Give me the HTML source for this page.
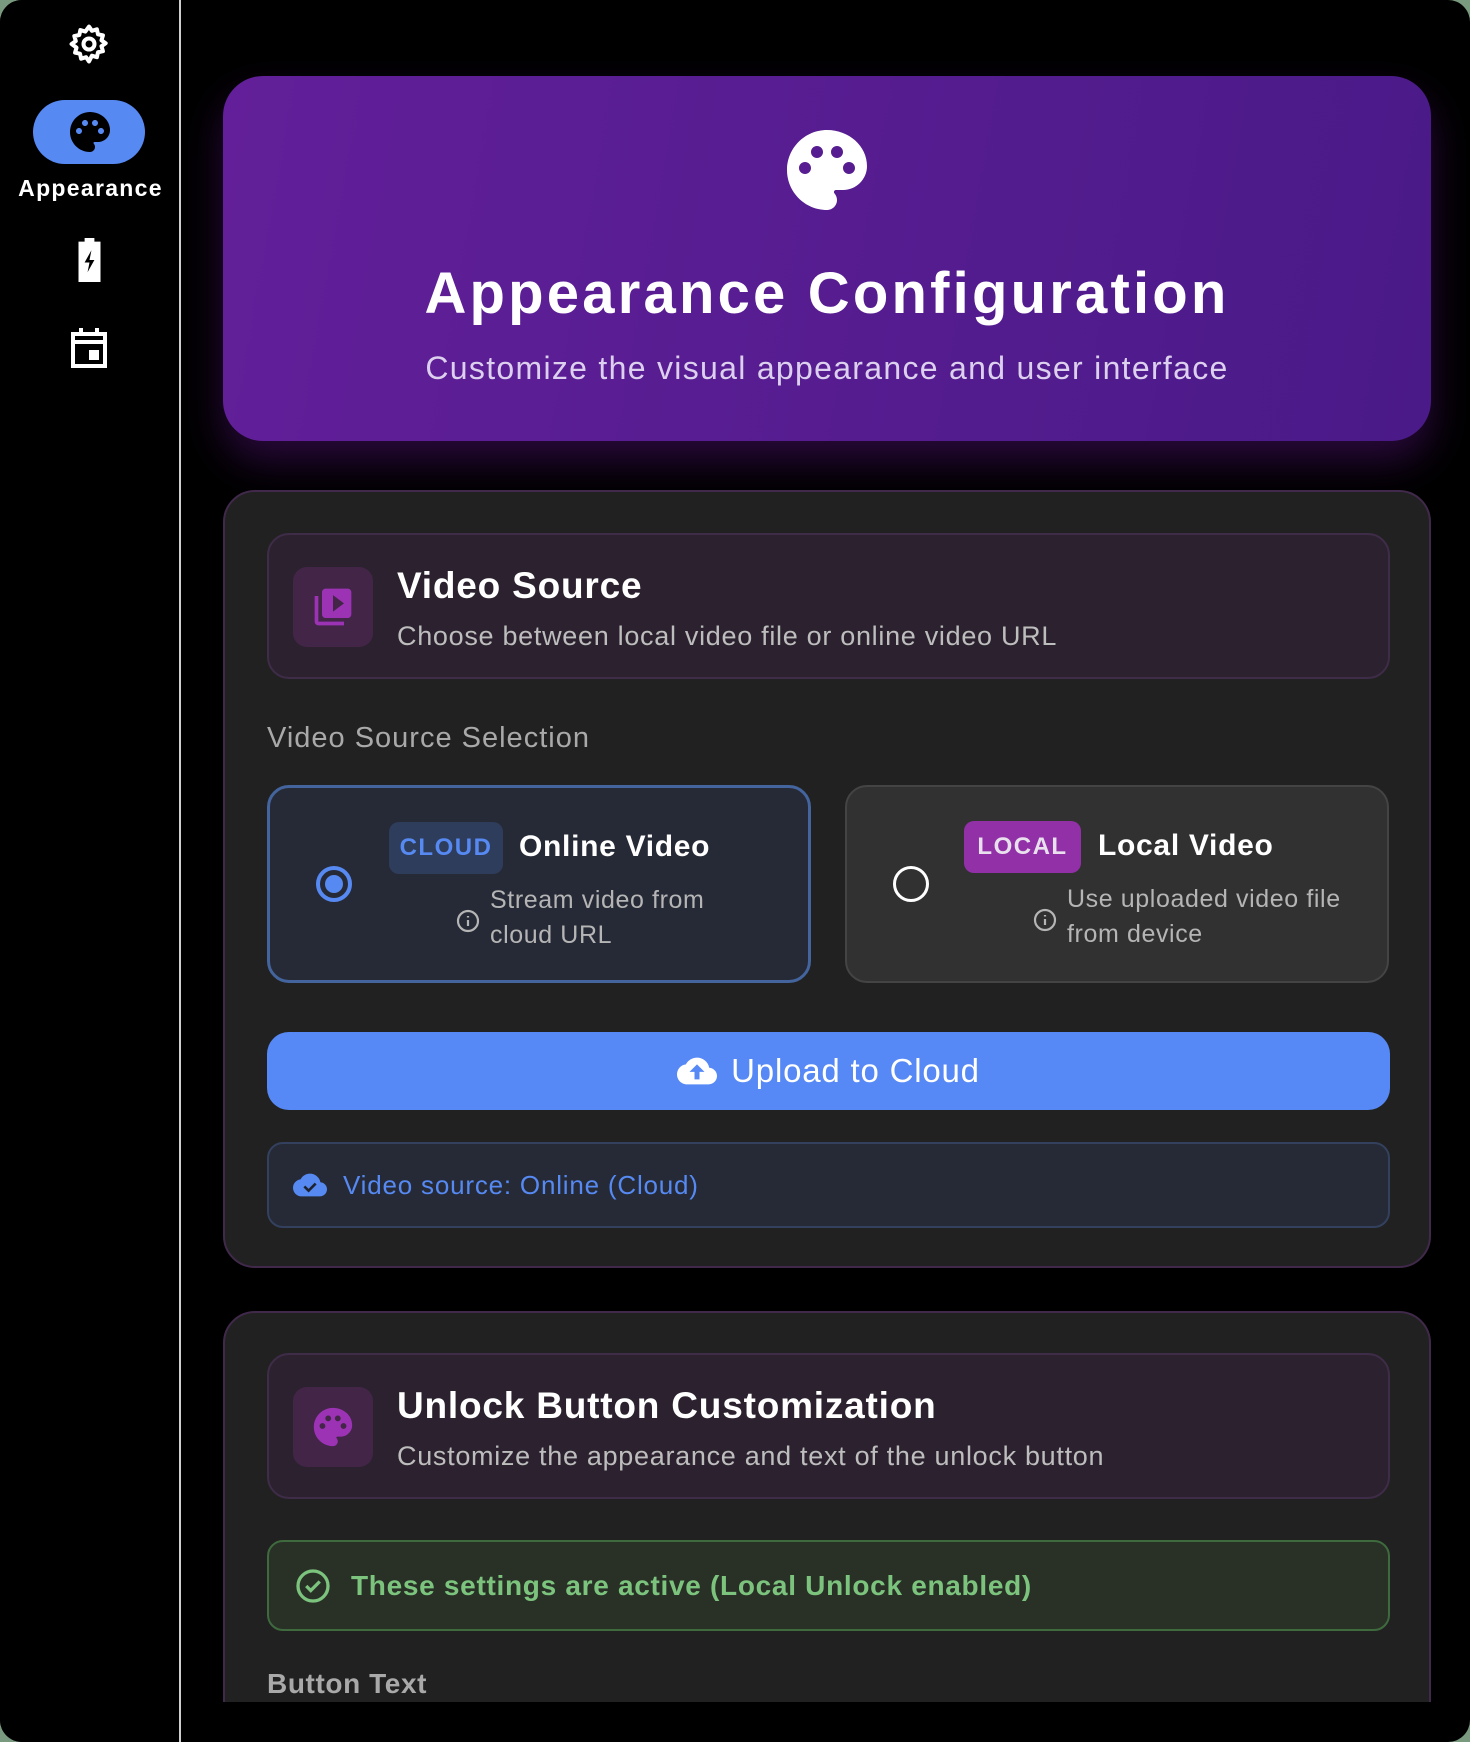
<!DOCTYPE html>
<html><head><meta charset="utf-8">
<style>
*{margin:0;padding:0;box-sizing:border-box}
body{width:1470px;height:1742px;background:#7a9a80;font-family:"Liberation Sans",sans-serif;overflow:hidden;position:relative}
.win{position:absolute;left:0;top:0;width:1470px;height:1742px;background:#000;border-radius:22px;overflow:hidden}
.side{position:absolute;left:0;top:0;width:181px;height:1742px;background:#000;border-right:2px solid #cfcfcf}
.a{position:absolute}
.main{position:absolute;left:183px;top:0;width:1287px;height:1702px;overflow:hidden}
.card{position:absolute;left:40px;width:1208px;background:#212121;border:2px solid #40294a;border-radius:32px}
.hb{position:absolute;left:42px;width:1123px;height:146px;background:#2c222f;border:2px solid #3f2c48;border-radius:22px}
.ib{position:absolute;left:24px;top:32px;width:80px;height:80px;background:#432548;border-radius:14px;display:flex;align-items:center;justify-content:center}
.ht{position:absolute;left:128px;top:30px;color:#fff;font-weight:bold;font-size:37px;letter-spacing:.8px}
.hd{position:absolute;left:128px;top:86px;color:#bdbdbd;font-size:27px;letter-spacing:.7px}
.opt{position:absolute;top:293px;width:544px;height:198px;border-radius:22px}
.badge{position:absolute;top:34px;height:52px;border-radius:10px;font-weight:bold;font-size:24px;letter-spacing:1.5px;display:flex;align-items:center;justify-content:center}
.ot{position:absolute;top:42px;color:#fff;font-size:30px;font-weight:bold;letter-spacing:.7px}
.od{position:absolute;top:95px;color:#b5b5b5;font-size:25px;line-height:35px;letter-spacing:.6px}
</style></head><body>
<div class="win">
<div class="side">
 <svg class="a" style="left:67px;top:22px" width="44" height="44" viewBox="0 0 24 24" fill="none" stroke="#fff" stroke-width="2.2"><circle cx="12" cy="12" r="3"/><path d="M12 2.5l1.6 2.3 2.7-.8.6 2.7 2.7.6-.8 2.7 2.3 1.6-2.3 1.6.8 2.7-2.7.6-.6 2.7-2.7-.8L12 21.5l-1.6-2.3-2.7.8-.6-2.7-2.7-.6.8-2.7L2.5 12l2.3-1.6-.8-2.7 2.7-.6.6-2.7 2.7.8z" stroke-linejoin="round"/></svg>
 <div class="a" style="left:33px;top:100px;width:112px;height:64px;background:#5689f2;border-radius:32px"></div>
 <svg class="a" style="left:66px;top:108px" width="48" height="48" viewBox="0 0 24 24"><path fill="#000" fill-rule="evenodd" d="M12 2C6.49 2 2 6.49 2 12s4.49 10 10 10c1.38 0 2.5-1.12 2.5-2.5 0-.61-.23-1.2-.64-1.67-.08-.1-.13-.21-.13-.33 0-.28.22-.5.5-.5H16c3.31 0 6-2.69 6-6 0-4.96-4.49-9-10-9zm-5.5 11c-.83 0-1.5-.67-1.5-1.5S5.67 10 6.5 10s1.5.67 1.5 1.5S7.33 13 6.5 13zm3-4C8.67 9 8 8.33 8 7.5S8.67 6 9.5 6s1.5.67 1.5 1.5S10.33 9 9.5 9zm5 0c-.83 0-1.5-.67-1.5-1.5S13.67 6 14.5 6s1.5.67 1.5 1.5S15.33 9 14.5 9zm3 4c-.83 0-1.5-.67-1.5-1.5s.67-1.5 1.5-1.5 1.5.67 1.5 1.5-.67 1.5-1.5 1.5z"/></svg>
 <div class="a" style="left:0;width:181px;top:175px;text-align:center;color:#fff;font-size:23px;font-weight:bold;letter-spacing:1.3px">Appearance</div>
 <svg class="a" style="left:77px;top:238px" width="25" height="44" viewBox="0 0 10 18"><path fill="#fff" d="M3 0h4v1.5h2.5V18H.5V1.5H3z"/><path fill="#000" d="M5.8 5L3 10h2l-.8 4L7 9H5z"/></svg>
 <svg class="a" style="left:69px;top:326px" width="40" height="42" viewBox="0 0 20 21"><path fill="none" stroke="#fff" stroke-width="2" d="M2 4h16v16H2z M2 8h16"/><path stroke="#fff" stroke-width="2" d="M6 1v4M14 1v4"/><rect x="10" y="12" width="5" height="5" fill="#fff"/></svg>
</div>
<div class="main">
 <div class="a" style="left:40px;top:76px;width:1208px;height:365px;border-radius:40px;background:linear-gradient(100deg,#621f99,#4a1a88);box-shadow:0 20px 40px rgba(90,20,130,.45)">
  <svg class="a" style="left:564px;top:54px" width="80" height="80" viewBox="2 2 20 20"><path fill="#fff" fill-rule="evenodd" d="M12 2C6.49 2 2 6.49 2 12s4.49 10 10 10c1.38 0 2.5-1.12 2.5-2.5 0-.61-.23-1.2-.64-1.67-.08-.1-.13-.21-.13-.33 0-.28.22-.5.5-.5H16c3.31 0 6-2.69 6-6 0-4.960-4.49-9-10-9zm-5.5 11c-.83 0-1.5-.67-1.5-1.5S5.67 10 6.5 10s1.5.67 1.5 1.5S7.33 13 6.5 13zm3-4C8.67 9 8 8.33 8 7.5S8.67 6 9.5 6s1.5.67 1.5 1.5S10.33 9 9.5 9zm5 0c-.83 0-1.5-.67-1.5-1.5S13.67 6 14.5 6s1.5.67 1.5 1.5S15.33 9 14.5 9zm3 4c-.83 0-1.5-.67-1.5-1.5s.67-1.5 1.5-1.5 1.5.67 1.5 1.5-.67 1.5-1.5 1.5z"/></svg>
  <div class="a" style="left:0;width:1208px;top:184px;text-align:center;color:#fff;font-weight:bold;font-size:58px;letter-spacing:3.2px">Appearance Configuration</div>
  <div class="a" style="left:0;width:1208px;top:274px;text-align:center;color:#ddd0ee;font-size:32px;letter-spacing:1.3px">Customize the visual appearance and user interface</div>
 </div>
 <div class="card" style="top:490px;height:778px">
  <div class="hb" style="top:41px">
   <div class="ib"><svg width="44" height="44" viewBox="0 0 24 24"><path fill="#9c33b5" d="M4 6H2v14c0 1.1.9 2 2 2h14v-2H4V6zm16-4H8c-1.1 0-2 .9-2 2v12c0 1.1.9 2 2 2h12c1.1 0 2-.9 2-2V4c0-1.1-.9-2-2-2zm-8 12.5v-9l6 4.5-6 4.5z"/></svg></div>
   <div class="ht">Video Source</div>
   <div class="hd">Choose between local video file or online video URL</div>
  </div>
  <div class="a" style="left:42px;top:230px;color:#a9a9a9;font-size:29px;letter-spacing:1px">Video Source Selection</div>
  <div class="opt" style="left:42px;background:#262a36;border:3px solid #44649e">
   <div class="a" style="left:46px;top:78px;width:36px;height:36px;border-radius:50%;border:4px solid #5689f2"><div style="margin:5px;width:18px;height:18px;border-radius:50%;background:#5689f2"></div></div>
   <div class="badge" style="left:119px;width:114px;background:#2f3d5c;color:#5689f2">CLOUD</div>
   <div class="ot" style="left:249px">Online Video</div>
   <svg class="a" style="left:186px;top:121px" width="24" height="24" viewBox="0 0 24 24" fill="none" stroke="#b5b5b5" stroke-width="2.2"><circle cx="12" cy="12" r="10"/><path d="M12 11v6M12 7v1.5"/></svg>
   <div class="od" style="left:220px">Stream video from<br>cloud URL</div>
  </div>
  <div class="opt" style="left:620px;background:#313131;border:2px solid #444">
   <div class="a" style="left:46px;top:79px;width:36px;height:36px;border-radius:50%;border:3.5px solid #fff"></div>
   <div class="badge" style="left:117px;width:117px;background:#9230a8;color:#e8e0ec">LOCAL</div>
   <div class="ot" style="left:251px">Local Video</div>
   <svg class="a" style="left:186px;top:121px" width="24" height="24" viewBox="0 0 24 24" fill="none" stroke="#b5b5b5" stroke-width="2.2"><circle cx="12" cy="12" r="10"/><path d="M12 11v6M12 7v1.5"/></svg>
   <div class="od" style="left:220px">Use uploaded video file<br>from device</div>
  </div>
  <div class="a" style="left:42px;top:540px;width:1123px;height:78px;background:#5689f6;border-radius:22px;color:#fff;font-size:33px;display:flex;align-items:center;justify-content:center;letter-spacing:.8px">
   <svg width="40" height="30" viewBox="0 0 24 18" style="margin-right:14px"><path fill="#fff" d="M19.35 7.04A7.49 7.49 0 0 0 12 1C9.11 1 6.6 2.64 5.35 5.04A5.994 5.994 0 0 0 0 11c0 3.31 2.69 6 6 6h13c2.76 0 5-2.240 5-5 0-2.64-2.05-4.78-4.65-4.96z"/><path fill="#5689f6" d="M12 5l-4.5 4.5H10.5V14h3V9.5h3z"/></svg>Upload to Cloud</div>
  <div class="a" style="left:42px;top:650px;width:1123px;height:86px;background:#252a36;border:2px solid #33415e;border-radius:16px;color:#5689f2;font-size:26px;display:flex;align-items:center;letter-spacing:.8px">
   <svg width="34" height="26" viewBox="0 0 24 18" style="margin:0 16px 0 24px"><path fill="#5689f2" d="M19.35 7.04A7.49 7.49 0 0 0 12 1C9.11 1 6.6 2.64 5.35 5.04A5.994 5.994 0 0 0 0 11c0 3.31 2.69 6 6 6h13c2.76 0 5-2.24 5-5 0-2.64-2.05-4.78-4.65-4.96z"/><path fill="none" stroke="#1e2330" stroke-width="1.8" d="M8 10l3 3 5-5"/></svg>Video source: Online (Cloud)</div>
 </div>
 <div class="card" style="top:1311px;height:440px">
  <div class="hb" style="top:40px">
   <div class="ib"><svg width="46" height="46" viewBox="0 0 24 24"><path fill="#9c33b5" fill-rule="evenodd" d="M12 2C6.49 2 2 6.49 2 12s4.49 10 10 10c1.38 0 2.5-1.12 2.5-2.5 0-.61-.23-1.2-.64-1.67-.08-.1-.13-.21-.13-.33 0-.28.22-.5.5-.5H16c3.31 0 6-2.69 6-6 0-4.96-4.49-9-10-9zm-5.5 11c-.83 0-1.5-.67-1.5-1.5S5.67 10 6.5 10s1.5.67 1.5 1.5S7.33 13 6.5 13zm3-4C8.67 9 8 8.33 8 7.5S8.67 6 9.5 6s1.5.67 1.5 1.5S10.33 9 9.5 9zm5 0c-.83 0-1.5-.67-1.5-1.5S13.67 6 14.5 6s1.5.67 1.5 1.5S15.33 9 14.5 9zm3 4c-.83 0-1.5-.67-1.5-1.5s.67-1.5 1.5-1.5 1.5.67 1.5 1.5-.67 1.5-1.5 1.5z"/></svg></div>
   <div class="ht">Unlock Button Customization</div>
   <div class="hd">Customize the appearance and text of the unlock button</div>
  </div>
  <div class="a" style="left:42px;top:227px;width:1123px;height:91px;background:#293127;border:2px solid #3e6a3e;border-radius:16px;color:#7cc47e;font-size:28px;font-weight:bold;display:flex;align-items:center;letter-spacing:.7px">
   <svg width="36" height="36" viewBox="0 0 24 24" style="margin:0 20px 0 26px" fill="none" stroke="#7cc47e" stroke-width="2.2"><circle cx="12" cy="12" r="10"/><path d="M7.5 12l3 3 6-6"/></svg>These settings are active (Local Unlock enabled)</div>
  <div class="a" style="left:42px;top:355px;color:#a9a9a9;font-size:28px;font-weight:bold;letter-spacing:.6px">Button Text</div>
 </div>
</div>
</div>
</body></html>
